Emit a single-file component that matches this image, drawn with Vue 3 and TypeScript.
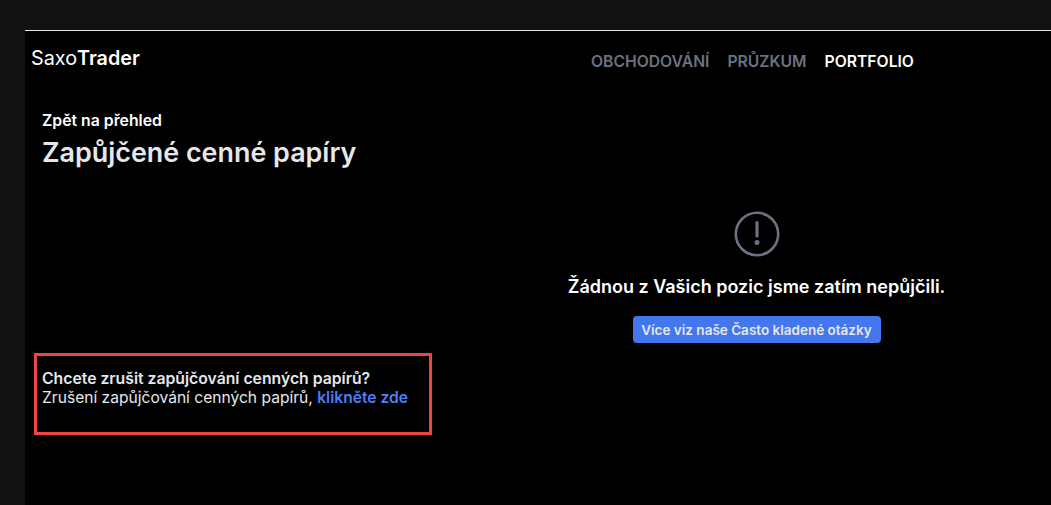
<script setup lang="ts">
const navItems = [
  { label: 'Obchodování', active: false },
  { label: 'Průzkum', active: false },
  { label: 'Portfolio', active: true },
];
</script>

<template>
  <div class="page">
    <div class="shell">
      <header class="header">
        <div class="logo">Saxo<b>Trader</b></div>
        <nav class="nav">
          <a v-for="item in navItems" :key="item.label" :class="{ active: item.active }">{{ item.label }}</a>
        </nav>
      </header>
      <main class="content">
        <section class="left">
          <div class="back">Zpět na přehled</div>
          <h1 class="title">Zapůjčené cenné papíry</h1>
          <div class="cancel-box">
            <strong>Chcete zrušit zapůjčování cenných papírů?</strong>
            <p>Zrušení zapůjčování cenných papírů, <a>klikněte zde</a></p>
          </div>
        </section>
        <section class="right">
          <svg class="alert-icon" width="46" height="46" viewBox="0 0 46 46" fill="none">
            <circle cx="23" cy="23" r="21.2" stroke="#6b7280" stroke-width="2.6" />
            <path d="M23 11.5V25" stroke="#6b7280" stroke-width="3.2" stroke-linecap="round" />
            <circle cx="23" cy="31.5" r="2.5" fill="#6b7280" />
          </svg>
          <p class="empty-text">Žádnou z Vašich pozic jsme zatím nepůjčili.</p>
          <button class="faq-btn">Více viz naše Často kladené otázky</button>
        </section>
      </main>
    </div>
  </div>
</template>

<style>
html, body {
  margin: 0;
  background: #111111;
  overflow: hidden;
}
</style>

<style scoped>
.page {
  height: 505px;
  padding: 30px 0 0 25px;
  box-sizing: border-box;
  background: #111111;
  font-family: Inter, "Noto Sans", sans-serif;
}

.shell {
  height: 475px;
  background: #000;
  border-top: 1px solid #e5e7eb;
  box-sizing: border-box;
}

.header {
  display: flex;
  height: 50px;
  padding-left: 6px;
}

.logo {
  width: 560px;
  padding-top: 15px;
  font-size: 19.8px;
  line-height: 24px;
  color: #fff;
}

.logo b {
  font-weight: 600;
}

.nav {
  display: flex;
  gap: 18px;
  padding-top: 21px;
}

.nav a {
  font-size: 15.7px;
  line-height: 20px;
  font-weight: 600;
  text-transform: uppercase;
  color: #6b7280;
}

.nav a.active {
  color: #fff;
}

.content {
  display: flex;
}

.left {
  flex: none;
  width: 398px;
  padding: 30px 0 0 9px;
}

.back {
  margin-left: 8px;
  font-size: 15.8px;
  line-height: 20px;
  font-weight: 600;
  color: #fff;
}

.title {
  margin: 5px 0 0 8px;
  font-size: 26.9px;
  line-height: 32px;
  font-weight: 600;
  color: #e5e7eb;
}

.cancel-box {
  width: 398px;
  height: 82px;
  margin-top: 185px;
  padding: 13px 0 0 5px;
  border: 3px solid #ef4444;
  box-sizing: border-box;
  font-size: 15.75px;
  line-height: 19px;
  color: #e5e7eb;
}

.cancel-box strong {
  font-weight: 600;
}

.cancel-box p {
  margin: 0;
  font-size: 15.6px;
}

.cancel-box a {
  font-weight: 600;
  color: #4d7ef7;
}

.right {
  display: flex;
  flex: 1;
  flex-direction: column;
  align-items: center;
  padding: 130px 0 0 30px;
}

.alert-icon {
  display: block;
}

.empty-text {
  margin: 16px 0 0;
  font-size: 18px;
  line-height: 28px;
  font-weight: 600;
  color: #fff;
}

.faq-btn {
  width: 248px;
  height: 27px;
  margin-top: 15px;
  padding: 0;
  border: 0;
  border-radius: 4px;
  background: #4477ee;
  font-family: inherit;
  font-size: 13.5px;
  font-weight: 600;
  color: #e5e7eb;
}
</style>
